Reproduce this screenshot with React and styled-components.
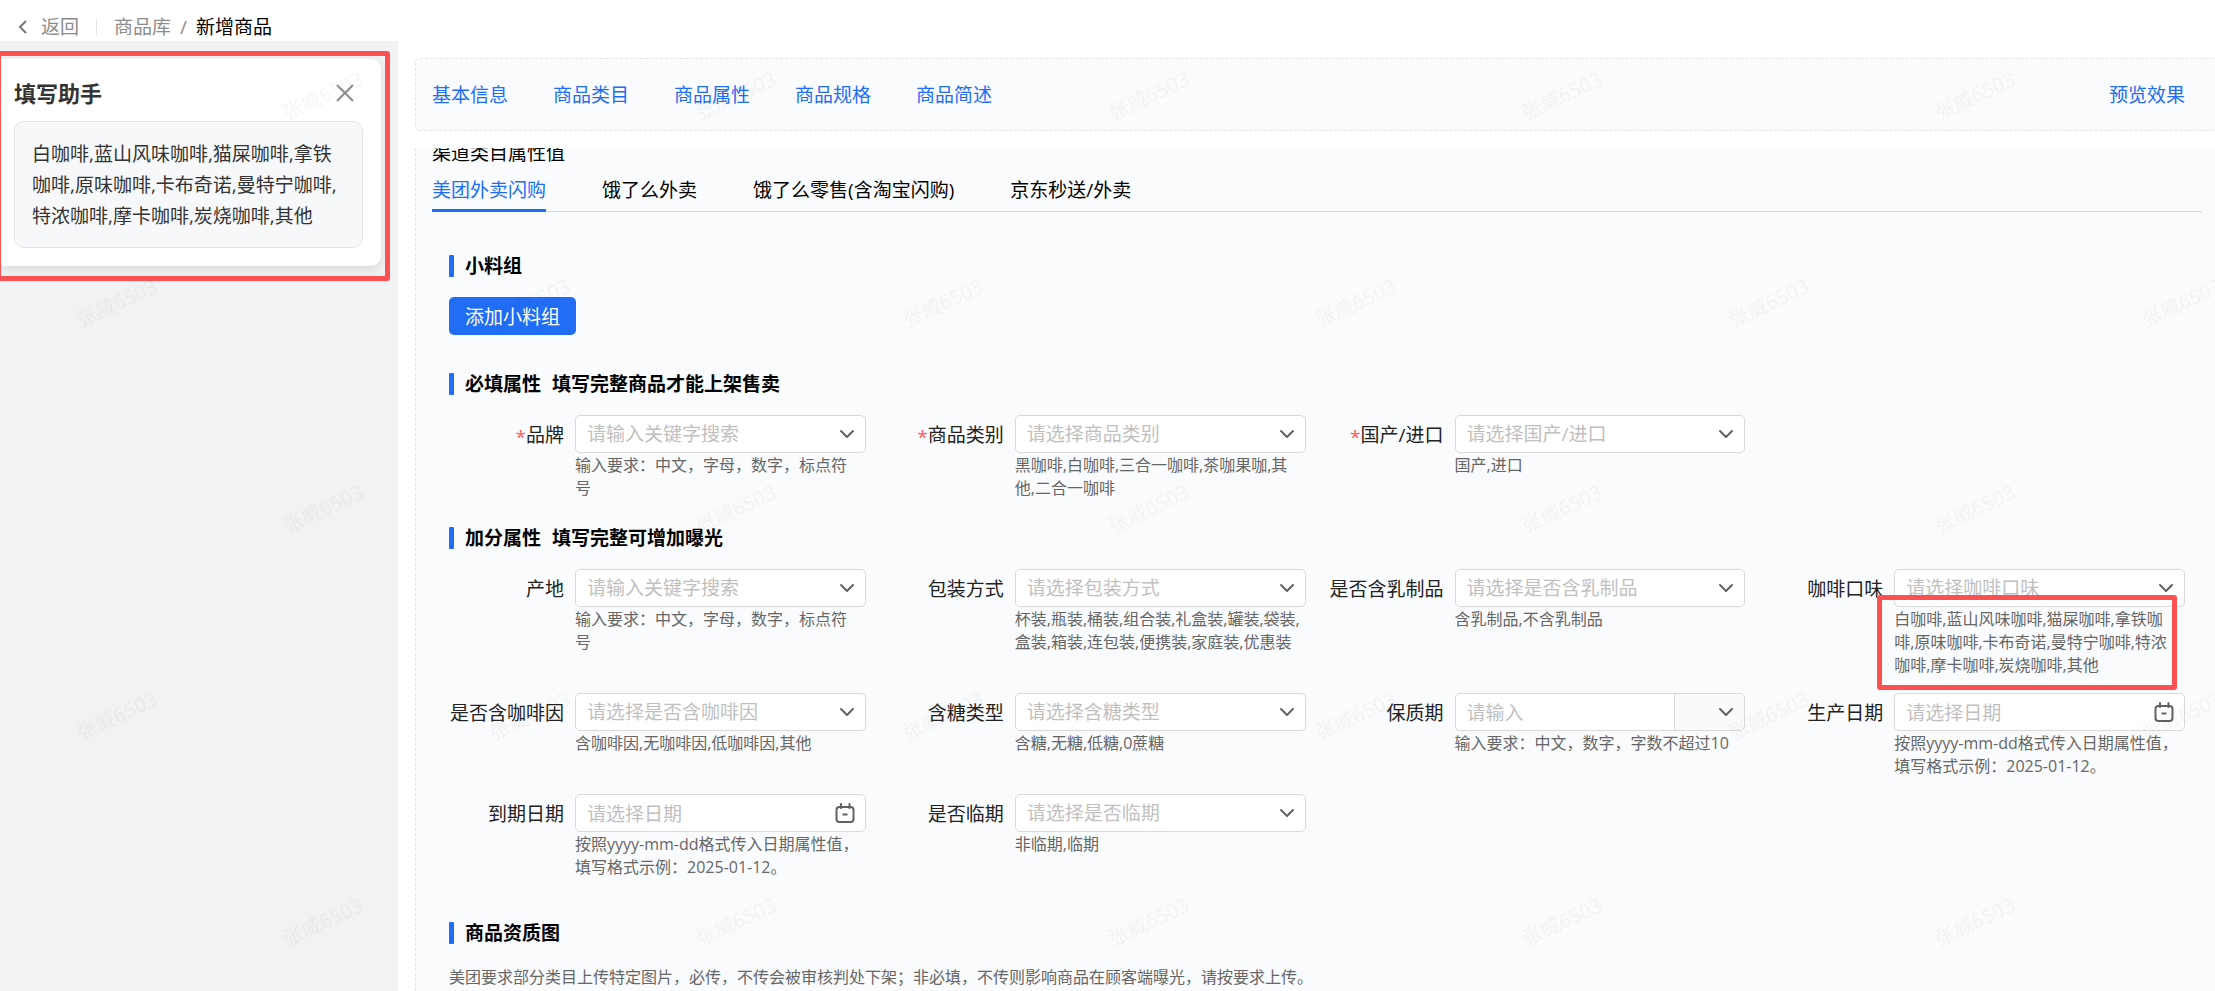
import React from 'react';
import styled, { createGlobalStyle } from 'styled-components';

const colors = {
  blue: '#226df5',
  red: '#fc5052',
  text: '#222222',
  hint: '#666666',
  placeholder: '#bfbfbf',
  border: '#d9d9d9',
  dashed: '#e2e4e6',
  panel: '#fafbfd',
  side: '#f1f2f4',
};

const GlobalStyle = createGlobalStyle`
  * { box-sizing: border-box; }
  body {
    margin: 0;
    background: #fff;
    color: #000;
    font-family: 'Open Sans', 'Noto Sans CJK SC', sans-serif;
    font-size: 19px;
    line-height: 26px;
  }
  button, input, select { font: inherit; }
  a { text-decoration: none; }
`;

const Page = styled.div`
  display: flex;
  flex-direction: column;
  height: 100vh;
  overflow: hidden;
`;

const Header = styled.header`
  display: flex;
  align-items: center;
  flex: none;
  height: 41px;
  padding: 12px 18px 0;
`;

const BackLink = styled.a`
  display: flex;
  align-items: center;
  gap: 13px;
  color: #8c8c8c;
`;

const Divider = styled.span`
  width: 1px;
  height: 16px;
  margin: 0 17px 0 17px;
  background: #e2e2e2;
`;

const Crumbs = styled.nav`
  display: flex;
  gap: 9px;
  color: #8c8c8c;

  a { color: inherit; }
  span[aria-current] { color: #000; }
`;

const Layout = styled.div`
  display: flex;
  flex: 1;
  min-height: 0;
`;

const Side = styled.aside`
  position: relative;
  flex: 0 0 398px;
  padding: 18px 17px 0 0;
  background: ${colors.side};
`;

const Marker = styled.div`
  position: absolute;
  top: ${({ $top }) => $top}px;
  left: ${({ $left }) => $left}px;
  right: ${({ $right }) => $right}px;
  height: ${({ $height }) => $height}px;
  border: 5px solid ${colors.red};
  border-radius: 3px;
  pointer-events: none;
`;

const HelperCard = styled.section`
  padding: 18px 18px 18px 14px;
  background: #fff;
  border-radius: 3px 10px 10px 3px;
  box-shadow: 0 4px 12px rgba(0, 0, 0, 0.1);
`;

const HelperHead = styled.div`
  display: flex;
  align-items: center;
  justify-content: space-between;
  height: 32px;
  margin-bottom: 12px;
  padding-right: 9px;

  h2 {
    margin: 0;
    color: #333;
    font-size: 22px;
    font-weight: 700;
  }
`;

const IconButton = styled.button`
  display: flex;
  padding: 0;
  border: 0;
  background: none;
  cursor: pointer;
`;

const HelperText = styled.p`
  margin: 0;
  padding: 17px 17px 15px;
  border: 1px solid #e3e4e6;
  border-radius: 10px;
  background: #f7f8fa;
  color: #333;
  line-height: 31px;
`;

const Main = styled.main`
  display: flex;
  flex-direction: column;
  flex: 1;
  min-width: 0;
  gap: 17px;
  padding: 17px 0 0 17px;
`;

const Anchors = styled.nav`
  display: flex;
  align-items: center;
  flex: none;
  gap: 45px;
  height: 73px;
  padding: 0 30px 0 16px;
  border: 1px dashed ${colors.dashed};
  border-right: 0;
  border-radius: 5px 0 0 5px;
  background: ${colors.panel};

  a { color: ${colors.blue}; }
  a:last-child { margin-left: auto; }
`;

const Panel = styled.div`
  flex: 1;
  min-height: 0;
  overflow: hidden;
  border-left: 1px dashed ${colors.dashed};
  background: ${colors.panel};
`;

const Scrolled = styled.div`
  margin-top: -8px;
  padding: 0 13px 0 16px;
`;

const PanelTitle = styled.h1`
  margin: 0;
  font-size: 19px;
  font-weight: 400;
`;

const Tabs = styled.div`
  display: flex;
  gap: 56px;
  margin-bottom: 43px;
  border-bottom: 1px solid ${colors.border};
`;

const Tab = styled.button`
  height: 46px;
  margin-bottom: -1px;
  padding: 5px 0 0;
  border: 0;
  border-bottom: 3px solid ${({ $active }) => ($active ? colors.blue : 'transparent')};
  background: none;
  color: ${({ $active }) => ($active ? colors.blue : '#000')};
  cursor: pointer;
`;

const Section = styled.section`
  margin-bottom: ${({ $space }) => $space}px;
  padding: 0 17px;
`;

const SectionTitle = styled.h2`
  display: flex;
  align-items: center;
  gap: 11px;
  height: 22px;
  margin: 0 0 20px;
  font-size: 19px;
  font-weight: 700;

  &::before {
    content: '';
    width: 5px;
    height: 22px;
    border-radius: 1px;
    background: ${colors.blue};
  }
`;

const PrimaryButton = styled.button`
  display: block;
  height: 38px;
  padding: 2px 16px 0;
  border: 0;
  border-radius: 5px;
  background: ${colors.blue};
  color: #fff;
  cursor: pointer;
`;

const FieldGrid = styled.div`
  display: grid;
  grid-template-columns: repeat(4, 1fr);
  gap: 16px 23px;
`;

const Field = styled.div`
  display: flex;
  gap: 11px;
`;

const FieldLabel = styled.label`
  display: flex;
  align-items: center;
  justify-content: flex-end;
  flex: 0 0 115px;
  height: 38px;
  padding-top: 2px;
  color: ${colors.text};
  white-space: nowrap;
`;

const Required = styled.span`
  padding-top: 4px;
  color: #ff5a5c;
`;

const Control = styled.div`
  position: relative;
  flex: 1;
  min-width: 0;
`;

const Box = styled.div`
  display: flex;
  height: 38px;
  overflow: hidden;
  border: 1px solid ${colors.border};
  border-radius: 5px;
  background: #fff;
`;

const Slot = styled.div`
  display: flex;
  align-items: center;
  position: relative;
  flex: ${({ $addon }) => ($addon ? '0 0 70px' : '1')};
  min-width: 0;
  border-left: ${({ $addon }) => ($addon ? `1px solid ${colors.border}` : '0')};
  background: ${({ $addon }) => ($addon ? '#fafafa' : 'transparent')};

  input, select {
    width: 100%;
    height: 36px;
    padding: 0 40px 0 11px;
    border: 0;
    outline: 0;
    appearance: none;
    background: transparent;
    color: ${colors.placeholder};
  }

  input { padding-top: 2px; }

  input::placeholder {
    color: ${colors.placeholder};
    opacity: 1;
  }

  svg {
    position: absolute;
    right: 10px;
    pointer-events: none;
  }
`;

const Hint = styled.p`
  margin: 0;
  padding-top: 1px;
  color: ${colors.hint};
  font-size: 16px;
  line-height: 23px;
  white-space: pre-line;
`;

const Note = styled.p`
  margin: 0;
  color: ${colors.hint};
  font-size: 16px;
`;

const WatermarkLayer = styled.svg`
  position: fixed;
  inset: 0;
  width: 100%;
  height: 100%;
  pointer-events: none;

  text {
    fill: #000;
    fill-opacity: 0.035;
    font-size: 20px;
    text-anchor: middle;
  }
`;

const ChevronDown = () => (
  <svg width="16" height="10" viewBox="0 0 16 10" fill="none" stroke="#606266" strokeWidth="2">
    <path d="M2 2l6 6 6-6" strokeLinecap="round" strokeLinejoin="round" />
  </svg>
);

const CalendarIcon = () => (
  <svg width="20" height="20" viewBox="0 0 20 20" fill="none" stroke="#606266" strokeWidth="2">
    <rect x="1.5" y="4" width="17" height="15" rx="3" />
    <path d="M6 1v4M14.5 1v4" strokeLinecap="round" />
    <path d="M7.5 11.5h5" />
  </svg>
);

const Watermark = () => (
  <WatermarkLayer aria-hidden="true">
    <defs>
      <pattern id="mark" width="413" height="413" patternUnits="userSpaceOnUse">
        <text transform="translate(323 96) rotate(-25)" dy="7">张威6503</text>
        <text transform="translate(117 303) rotate(-25)" dy="7">张威6503</text>
      </pattern>
    </defs>
    <rect width="100%" height="100%" fill="url(#mark)" />
  </WatermarkLayer>
);

const anchors = ['基本信息', '商品类目', '商品属性', '商品规格', '商品简述'];
const tabs = ['美团外卖闪购', '饿了么外卖', '饿了么零售(含淘宝闪购)', '京东秒送/外卖'];

const inputRule = '输入要求：中文，字母，数字，标点符\n号';
const dateRule = '按照yyyy-mm-dd格式传入日期属性值，\n填写格式示例：2025-01-12。';

const requiredFields = [
  { id: 'brand', label: '品牌', placeholder: '请输入关键字搜索', hint: inputRule, required: true },
  { id: 'category', label: '商品类别', placeholder: '请选择商品类别', hint: '黑咖啡,白咖啡,三合一咖啡,茶咖果咖,其\n他,二合一咖啡', required: true },
  { id: 'source', label: '国产/进口', placeholder: '请选择国产/进口', hint: '国产,进口', required: true },
];

const bonusFields = [
  { id: 'origin', label: '产地', placeholder: '请输入关键字搜索', hint: inputRule },
  { id: 'package', label: '包装方式', placeholder: '请选择包装方式', hint: '杯装,瓶装,桶装,组合装,礼盒装,罐装,袋装,\n盒装,箱装,连包装,便携装,家庭装,优惠装' },
  { id: 'dairy', label: '是否含乳制品', placeholder: '请选择是否含乳制品', hint: '含乳制品,不含乳制品' },
  { id: 'flavor', label: '咖啡口味', placeholder: '请选择咖啡口味', hint: '白咖啡,蓝山风味咖啡,猫屎咖啡,拿铁咖\n啡,原味咖啡,卡布奇诺,曼特宁咖啡,特浓\n咖啡,摩卡咖啡,炭烧咖啡,其他', marked: true },
  { id: 'caffeine', label: '是否含咖啡因', placeholder: '请选择是否含咖啡因', hint: '含咖啡因,无咖啡因,低咖啡因,其他' },
  { id: 'sugar', label: '含糖类型', placeholder: '请选择含糖类型', hint: '含糖,无糖,低糖,0蔗糖' },
  { id: 'shelf', label: '保质期', type: 'unit', placeholder: '请输入', hint: '输入要求：中文，数字，字数不超过10' },
  { id: 'produced', label: '生产日期', type: 'date', placeholder: '请选择日期', hint: dateRule },
  { id: 'expires', label: '到期日期', type: 'date', placeholder: '请选择日期', hint: dateRule },
  { id: 'expiring', label: '是否临期', placeholder: '请选择是否临期', hint: '非临期,临期' },
];

const FieldBox = ({ field }) => {
  const { id, label, type, placeholder } = field;

  if (type === 'date') {
    return (
      <Box>
        <Slot>
          <input id={id} type="text" placeholder={placeholder} />
          <CalendarIcon />
        </Slot>
      </Box>
    );
  }

  if (type === 'unit') {
    return (
      <Box>
        <Slot><input id={id} type="text" placeholder={placeholder} /></Slot>
        <Slot $addon>
          <select aria-label={`${label}单位`} />
          <ChevronDown />
        </Slot>
      </Box>
    );
  }

  return (
    <Box>
      <Slot>
        <select id={id} defaultValue="">
          <option value="" disabled>{placeholder}</option>
        </select>
        <ChevronDown />
      </Slot>
    </Box>
  );
};

const Fields = ({ items }) => (
  <FieldGrid>
    {items.map(field => (
      <Field key={field.id}>
        <FieldLabel htmlFor={field.id}>
          {field.required && <Required>*</Required>}
          {field.label}
        </FieldLabel>
        <Control>
          <FieldBox field={field} />
          <Hint>{field.hint}</Hint>
          {field.marked && <Marker $top={26} $left={-17} $right={8} $height={95} />}
        </Control>
      </Field>
    ))}
  </FieldGrid>
);

const App = () => (
  <Page>
    <GlobalStyle />
    <Header>
      <BackLink href="#back">
        <svg width="10" height="16" viewBox="0 0 10 16" fill="none" stroke="#777" strokeWidth="2">
          <path d="M8 2L2 8l6 6" />
        </svg>
        返回
      </BackLink>
      <Divider />
      <Crumbs>
        <a href="#library">商品库</a>
        <span>/</span>
        <span aria-current="page">新增商品</span>
      </Crumbs>
    </Header>
    <Layout>
      <Side>
        <HelperCard>
          <HelperHead>
            <h2>填写助手</h2>
            <IconButton aria-label="关闭">
              <svg width="18" height="18" viewBox="0 0 18 18" fill="none" stroke="#8c8c8c" strokeWidth="2">
                <path d="M1 1l16 16M17 1L1 17" />
              </svg>
            </IconButton>
          </HelperHead>
          <HelperText>
            白咖啡,蓝山风味咖啡,猫屎咖啡,拿铁咖啡,原味咖啡,卡布奇诺,曼特宁咖啡,特浓咖啡,摩卡咖啡,炭烧咖啡,其他
          </HelperText>
        </HelperCard>
        <Marker $top={10} $left={-4} $right={8} $height={230} />
      </Side>
      <Main>
        <Anchors>
          {anchors.map(name => <a key={name} href={`#${name}`}>{name}</a>)}
          <a href="#preview">预览效果</a>
        </Anchors>
        <Panel>
          <Scrolled>
            <PanelTitle>渠道类目属性值</PanelTitle>
            <Tabs role="tablist">
              {tabs.map((name, i) => (
                <Tab key={name} role="tab" aria-selected={i === 0} $active={i === 0}>{name}</Tab>
              ))}
            </Tabs>
            <Section $space={38}>
              <SectionTitle>小料组</SectionTitle>
              <PrimaryButton>添加小料组</PrimaryButton>
            </Section>
            <Section $space={27}>
              <SectionTitle>
                <span>必填属性</span>
                <span>填写完整商品才能上架售卖</span>
              </SectionTitle>
              <Fields items={requiredFields} />
            </Section>
            <Section $space={43}>
              <SectionTitle>
                <span>加分属性</span>
                <span>填写完整可增加曝光</span>
              </SectionTitle>
              <Fields items={bonusFields} />
            </Section>
            <Section $space={0}>
              <SectionTitle>商品资质图</SectionTitle>
              <Note>
                美团要求部分类目上传特定图片，必传，不传会被审核判处下架；非必填，不传则影响商品在顾客端曝光，请按要求上传。
              </Note>
            </Section>
          </Scrolled>
        </Panel>
      </Main>
    </Layout>
    <Watermark />
  </Page>
);

export default App;
